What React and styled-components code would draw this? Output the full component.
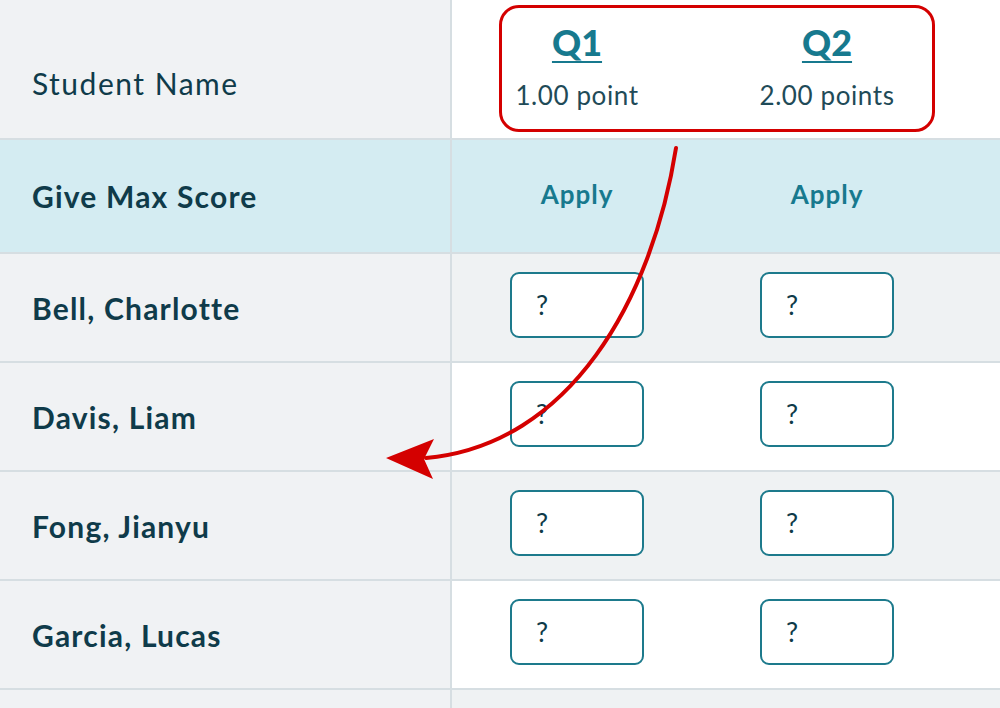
import React from "react";
import styled, { createGlobalStyle } from "styled-components";

const students = ["Bell, Charlotte", "Davis, Liam", "Fong, Jianyu", "Garcia, Lucas"];
const questions = [
  { label: "Q1", points: "1.00 point" },
  { label: "Q2", points: "2.00 points" },
];

export default function App() {
  return (
    <>
      <GlobalStyle />
      <Page>
        <Table>
          <HeaderRow>
            <NameCell head>
              <HeadText>Student Name</HeadText>
            </NameCell>
            <Cells>
              {questions.map((q) => (
                <QuestionCell key={q.label}>
                  <QLink href="#">{q.label}</QLink>
                  <Points>{q.points}</Points>
                </QuestionCell>
              ))}
            </Cells>
          </HeaderRow>
          <MaxRow>
            <NameCell tint="#d4ecf2">
              <BoldText>Give Max Score</BoldText>
            </NameCell>
            <Cells>
              {questions.map((q) => (
                <Cell key={q.label}>
                  <ApplyButton>Apply</ApplyButton>
                </Cell>
              ))}
            </Cells>
          </MaxRow>
          {students.map((name, i) => (
            <Row key={name} shade={i % 2 === 0}>
              <NameCell>
                <BoldText>{name}</BoldText>
              </NameCell>
              <Cells>
                {questions.map((q) => (
                  <Cell key={q.label}>
                    <ScoreBox>?</ScoreBox>
                  </Cell>
                ))}
              </Cells>
            </Row>
          ))}
          <Row shade>
            <NameCell />
            <Cells />
          </Row>
        </Table>

        <Highlight />
        <Arrow viewBox="0 0 1000 708" width="1000" height="708">
          <path
            d="M676 148 C 652 300 570 445 426 458"
            fill="none"
            stroke="#d40000"
            strokeWidth="4"
            strokeLinecap="round"
          />
          <path d="M386 458 L434 439 L424 459 L433 479 Z" fill="#d40000" />
        </Arrow>
      </Page>
    </>
  );
}

const GlobalStyle = createGlobalStyle`
  body {
    margin: 0;
    background: #fff;
    font-family: Lato, "Liberation Sans", sans-serif;
    color: #0f3b4a;
  }
`;

const Page = styled.div`
  position: relative;
  width: 1000px;
  height: 708px;
  overflow: hidden;
`;

const Table = styled.div`
  display: flex;
  flex-direction: column;
`;

const Row = styled.div`
  display: grid;
  grid-template-columns: 452px 1fr;
  height: 107px;
  border-bottom: 2px solid #d6dee2;
  background: ${(p) => (p.shade ? "#eff2f3" : "#fff")};
`;

const HeaderRow = styled(Row)`
  height: 138px;
  background: #fff;
`;

const MaxRow = styled(Row)`
  height: 112px;
  background: #d4ecf2;
`;

const NameCell = styled.div`
  display: flex;
  align-items: center;
  padding-left: 32px;
  padding-top: ${(p) => (p.head ? "28px" : "0")};
  background: ${(p) => p.tint || "#f0f2f4"};
  border-right: 2px solid #d6dee2;
`;

const HeadText = styled.span`
  font-size: 30px;
  font-weight: 400;
  letter-spacing: 1.5px;
`;

const BoldText = styled.span`
  font-size: 30px;
  font-weight: 700;
  letter-spacing: 1.2px;
`;

const Cells = styled.div`
  display: grid;
  grid-template-columns: 250px 250px;
`;

const Cell = styled.div`
  display: flex;
  align-items: center;
  justify-content: center;
`;

const QuestionCell = styled.div`
  display: flex;
  flex-direction: column;
  align-items: center;
  padding-top: 22px;
`;

const QLink = styled.a`
  font-size: 36px;
  font-weight: 900;
  color: #17798e;
  text-decoration: underline;
  text-decoration-thickness: 2px;
  text-underline-offset: 5px;
  line-height: 40px;
`;

const Points = styled.span`
  margin-top: 18px;
  font-size: 26px;
  letter-spacing: 0.6px;
  line-height: 30px;
  color: #1f4b58;
`;

const ApplyButton = styled.button`
  border: none;
  background: none;
  font-family: inherit;
  font-size: 26px;
  font-weight: 700;
  letter-spacing: 1px;
  color: #17798e;
  padding: 0;
  margin-top: -4px;
`;

const ScoreBox = styled.div`
  box-sizing: border-box;
  width: 134px;
  height: 66px;
  margin-top: -5px;
  padding: 14px 0 0 24px;
  border: 2px solid #1d7a8c;
  border-radius: 9px;
  background: #fff;
  font-size: 27px;
  color: #0f3b4a;
`;

const Highlight = styled.div`
  position: absolute;
  left: 499px;
  top: 5px;
  width: 436px;
  height: 127px;
  box-sizing: border-box;
  border: 3px solid #d40000;
  border-radius: 20px;
  pointer-events: none;
`;

const Arrow = styled.svg`
  position: absolute;
  left: 0;
  top: 0;
  pointer-events: none;
`;
